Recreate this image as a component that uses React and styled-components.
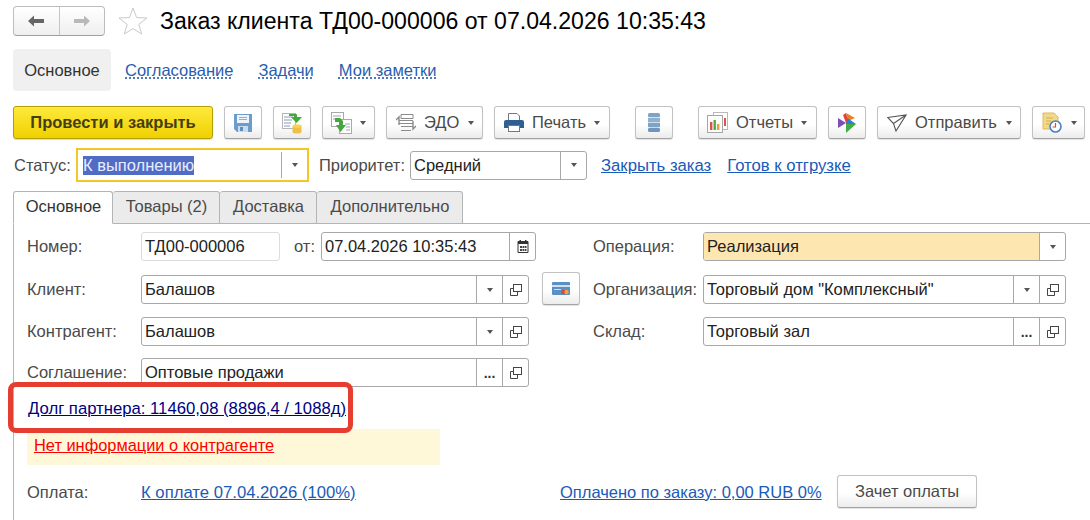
import React from "react";
import styled, { createGlobalStyle } from "styled-components";

const GlobalStyle = createGlobalStyle`
  html, body {
    margin: 0;
    padding: 0;
    background: #fff;
  }
  body {
    width: 1090px;
    height: 520px;
    overflow: hidden;
    font-family: "Liberation Sans", Arial, sans-serif;
    font-size: 16.5px;
    color: #333;
  }
`;

const Page = styled.div`
  position: relative;
  width: 1090px;
  height: 520px;
  padding-top: 6px;
  box-sizing: border-box;
  overflow: hidden;
`;

const Header = styled.div`
  display: flex;
  align-items: center;
  height: 30px;
  padding-left: 13px;
`;

const NavGroup = styled.div`
  display: flex;
  width: 92px;
  height: 30px;
  box-sizing: border-box;
  border: 1px solid #bdbdbd;
  border-bottom-color: #9f9f9f;
  border-radius: 4px;
  background: linear-gradient(#fff, #efefef);
`;

const NavButton = styled.div`
  flex: 1;
  display: flex;
  align-items: center;
  justify-content: center;
  & + & {
    border-left: 1px solid #c6c6c6;
  }
`;

const StarWrap = styled.div`
  display: flex;
  margin: 0 12px 0 13px;
`;

const Title = styled.div`
  font-size: 23.1px;
  color: #000;
  white-space: nowrap;
`;

const Sections = styled.div`
  display: flex;
  align-items: center;
  height: 42px;
  margin-top: 13px;
  padding-left: 13px;
`;

const SectionActive = styled.div`
  display: flex;
  align-items: center;
  justify-content: center;
  width: 98px;
  height: 42px;
  border-radius: 4px;
  background: #f0f0f0;
  color: #333;
`;

const SectionLink = styled.a`
  margin-left: ${(p) => p.$gap}px;
  color: #2a5db0;
  text-decoration: underline dotted #2a5db0;
  text-underline-offset: 2px;
`;

const Toolbar = styled.div`
  display: flex;
  height: 33px;
  margin-top: 15px;
  padding-left: 13px;
`;

const ToolButton = styled.div`
  display: flex;
  align-items: center;
  justify-content: ${(p) => (p.$pad ? "flex-start" : "center")};
  flex: none;
  width: ${(p) => p.$w}px;
  margin-left: ${(p) => p.$gap || 0}px;
  padding-left: ${(p) => p.$pad || 0}px;
  box-sizing: border-box;
  border: 1px solid #c2c2c2;
  border-bottom-color: #a3a3a3;
  border-radius: 3px;
  background: linear-gradient(#fff 55%, #ececec);
  box-shadow: 0 1px 1px rgba(0, 0, 0, 0.12);
  color: #4a4a4a;
  white-space: nowrap;
`;

const MainButton = styled.div`
  display: flex;
  align-items: center;
  justify-content: center;
  width: 200px;
  box-sizing: border-box;
  border: 1px solid #b59f00;
  border-radius: 3px;
  background: linear-gradient(#fdea3c, #f0d000);
  box-shadow: 0 1px 1px rgba(0, 0, 0, 0.15);
  color: #453e12;
  font-weight: bold;
  white-space: nowrap;
`;

const ToolLabel = styled.span`
  margin-left: ${(p) => p.$gap}px;
`;

const Caret = styled.i`
  display: block;
  flex: none;
  width: 0;
  height: 0;
  margin-left: ${(p) => p.$gap || 0}px;
  border-left: 3.5px solid transparent;
  border-right: 3.5px solid transparent;
  border-top: 4px solid #555;
`;

const StatusRow = styled.div`
  display: flex;
  align-items: center;
  height: 34px;
  margin-top: 9px;
  padding-left: 14px;
`;

const StatusLabel = styled.span`
  width: 62px;
  color: #4a4a4a;
`;

const StatusField = styled.div`
  display: flex;
  align-items: center;
  width: 233px;
  height: 34px;
  box-sizing: border-box;
  padding-left: 5px;
  border: 2px solid #f6c624;
`;

const StatusValue = styled.div`
  flex: 1;
  display: flex;
  align-items: center;
  height: 26px;
  border-right: 1px solid #a8a8a8;
`;

const Selected = styled.span`
  background: #506cc4;
  color: #e8ecff;
  line-height: 19px;
`;

const StatusArrow = styled.div`
  display: flex;
  align-items: center;
  justify-content: center;
  width: 25px;
`;

const PriorityLabel = styled.span`
  margin-left: 10px;
  width: 91px;
  color: #4a4a4a;
`;

const Field = styled.div`
  display: flex;
  flex: none;
  width: ${(p) => p.$w}px;
  height: 29px;
  box-sizing: border-box;
  border: 1px solid ${(p) => (p.$soft ? "#dcdcdc" : "#a8a8a8")};
  border-radius: 3px;
  background: #fff;
  overflow: hidden;
`;

const FieldText = styled.div`
  flex: 1;
  display: flex;
  align-items: center;
  padding-left: 3px;
  background: ${(p) => p.$bg || "transparent"};
  color: #222;
  white-space: nowrap;
`;

const FieldButton = styled.div`
  display: flex;
  flex: none;
  align-items: center;
  justify-content: center;
  width: 25px;
  border-left: 1px solid #a8a8a8;
  color: #333;
  font-size: 14px;
  font-weight: bold;
`;

const StatusLink = styled.a`
  margin-left: ${(p) => p.$gap}px;
  padding-top: 2px;
  color: #1a5ab8;
  font-size: 16.7px;
  text-decoration: underline;
`;

const Tabs = styled.div`
  position: relative;
  z-index: 1;
  display: flex;
  height: 33px;
  margin-top: 9px;
  margin-bottom: -1px;
  padding-left: 13px;
`;

const Tab = styled.div`
  display: flex;
  align-items: center;
  justify-content: center;
  width: ${(p) => p.$w}px;
  padding: 0 0 2px 1px;
  box-sizing: border-box;
  border: 1px solid #b4b4b4;
  border-left-width: ${(p) => (p.$first ? 1 : 0)}px;
  border-bottom-color: ${(p) => (p.$active ? "#fff" : "#b4b4b4")};
  border-radius: 3px 3px 0 0;
  background: ${(p) => (p.$active ? "#fff" : "#ebebeb")};
  color: ${(p) => (p.$active ? "#333" : "#4a4a4a")};
`;

const Panel = styled.div`
  margin-left: 13px;
  height: 300px;
  padding: 8px 0 0 13px;
  box-sizing: border-box;
  border-top: 1px solid #b4b4b4;
  border-left: 1px solid #b4b4b4;
`;

const FormGrid = styled.div`
  display: grid;
  grid-template-columns: 515px 38px 13px 473px;
  grid-template-rows: 43px 42px 41px 29px;
`;

const Row = styled.div`
  display: flex;
  align-items: flex-start;
  grid-column: ${(p) => p.$col};
`;

const Label = styled.div`
  flex: none;
  width: ${(p) => p.$w}px;
  height: 29px;
  line-height: 29px;
  color: #4a4a4a;
  white-space: nowrap;
`;

const OtLabel = styled.div`
  width: 41px;
  height: 29px;
  padding-right: 6px;
  box-sizing: border-box;
  line-height: 29px;
  text-align: right;
  color: #4a4a4a;
`;

const CardButton = styled(ToolButton)`
  grid-column: 2;
  height: 33px;
  margin-top: -3px;
  align-self: start;
`;

const DebtLine = styled.div`
  height: 42px;
  padding: 12px 0 0 1px;
  box-sizing: border-box;
  line-height: 19px;
`;

const DebtLink = styled.a`
  color: #00007f;
  font-size: 16.7px;
  text-decoration: underline;
`;

const Warning = styled.div`
  display: flex;
  align-items: center;
  width: 413px;
  height: 36px;
  padding: 0 0 3px 7px;
  box-sizing: border-box;
  background: #fff8d8;
`;

const WarningLink = styled.a`
  color: #f00;
  font-size: 16.4px;
  text-decoration: underline;
`;

const PayRow = styled.div`
  display: flex;
  align-items: center;
  height: 33px;
  margin-top: 10px;
`;

const PayLabel = styled(Label)`
  margin-top: 2px;
`;

const PayCell = styled.div`
  flex: none;
  width: ${(p) => p.$w}px;
  padding-top: 2px;
`;

const PayLink = styled.a`
  color: #1a5ab8;
  font-size: ${(p) => p.$size || 16.5}px;
  text-decoration: underline;
  white-space: nowrap;
`;

const OffsetButton = styled(ToolButton)`
  height: 33px;
`;

// the red frame someone drew over the screenshot
const Highlight = styled.div`
  position: absolute;
  left: 8px;
  top: 382px;
  width: 345px;
  height: 51px;
  box-sizing: border-box;
  border: 5px solid #e53d30;
  border-radius: 8px;
  pointer-events: none;
`;

const Arrow = ({ color, flip }) => (
  <svg width="18" height="14" viewBox="0 0 18 14" style={{ transform: flip ? "scaleX(-1)" : "none" }}>
    <path d="M1 7 L7 1.5 V5 H17 V9 H7 V12.5 Z" fill={color} />
  </svg>
);

const Star = () => (
  <svg width="30" height="28" viewBox="0 0 30 28">
    <path d="M15 1 L18.6 10.6 L29 11 L20.8 17.4 L23.7 27 L15 21.6 L6.3 27 L9.2 17.4 L1 11 L11.4 10.6 Z" fill="#fff" stroke="#c9c9c9" />
  </svg>
);

const SaveIcon = () => (
  <svg width="18" height="18" viewBox="0 0 18 18">
    <path d="M0 0 H18 V18 H3 L0 15 Z" fill="#6a9ccd" />
    <rect x="3" y="1" width="12" height="8" fill="#eef4fa" />
    <rect x="5" y="3" width="8" height="1" fill="#8eb2d4" />
    <rect x="5" y="5" width="8" height="1" fill="#8eb2d4" />
    <rect x="4" y="12" width="10" height="6" fill="#c9dbec" />
    <rect x="6" y="13" width="3" height="4" fill="#5b8dbf" />
  </svg>
);

const PostIcon = () => (
  <svg width="21" height="22" viewBox="0 0 21 22">
    <rect x="0.5" y="1.5" width="13" height="15" fill="#fff" stroke="#b5b5b5" />
    <path d="M2 5 H11 M2 8 H10 M2 11 H9 M2 14 H8" stroke="#8a9bb0" />
    <path d="M7 2 H14 Q15 2 15 3 V5 H20 L14.5 11 L9 5 H12 V4 H7 Z" fill="#45a83c" />
    <ellipse cx="15" cy="14" rx="4.5" ry="1.8" fill="#f6d25a" />
    <path d="M10.5 14 V20 C10.5 22 19.5 22 19.5 20 V14 C19.5 16 10.5 16 10.5 14 Z" fill="#eec043" />
  </svg>
);

const CopyGreenIcon = () => (
  <svg width="21" height="22" viewBox="0 0 21 22">
    <rect x="0.5" y="0.5" width="12" height="14" fill="#fff" stroke="#a9a9a9" />
    <path d="M2 4 H10 M2 7 H6" stroke="#9aa7b5" />
    <rect x="8.5" y="7.5" width="12" height="14" fill="#fff" stroke="#a9a9a9" />
    <path d="M14 12 H19 M15 15 H19 M15 18 H19" stroke="#9aa7b5" />
    <path d="M4 6 L9 6 L12 9 V13 H15 L9.5 20 L5 13 H8 V10 H4 Z" fill="#45a83c" />
  </svg>
);

const EdoIcon = () => (
  <svg width="20" height="20" viewBox="0 0 20 20" fill="none" stroke="#8b8b8b">
    <path d="M5 1.5 H17 V5.5 H5 Z M3 7.5 H17 M3 10.5 H17 M5 13.5 H17 M5 17.5 H15" />
    <path d="M0 7 L3 4 V12 M20 13 L17 16 V8" strokeWidth="1.4" />
  </svg>
);

const PrintIcon = () => (
  <svg width="20" height="19" viewBox="0 0 20 19">
    <path d="M5 0.5 H13 L15.5 3 V8 H4.5 V0.5 Z" fill="#fff" stroke="#777" />
    <path d="M2 7 H18 A2 2 0 0 1 20 9 V15 H16 V12 H4 V15 H0 V9 A2 2 0 0 1 2 7 Z" fill="#2f5f92" />
    <rect x="4.5" y="12.5" width="11" height="6" fill="#fff" stroke="#777" />
  </svg>
);

const StackIcon = () => (
  <svg width="12" height="19" viewBox="0 0 12 19">
    <rect x="0" y="0" width="12" height="4.3" rx="1.5" fill="#7ea3c6" />
    <rect x="0" y="4.9" width="12" height="4.3" fill="#8fb0cf" />
    <rect x="0" y="9.8" width="12" height="4.3" fill="#7ea3c6" />
    <rect x="0" y="14.7" width="12" height="4.3" rx="1.5" fill="#6e96bc" />
  </svg>
);

const ReportIcon = () => (
  <svg width="21" height="21" viewBox="0 0 21 21">
    <rect x="6.5" y="0.5" width="14" height="17" fill="#fff" stroke="#b9b9b9" />
    <rect x="0.5" y="3.5" width="15" height="17" fill="#fff" stroke="#a5a5a5" />
    <rect x="3" y="10" width="2.4" height="8" fill="#d9534a" />
    <rect x="6.5" y="8" width="2.4" height="10" fill="#55a84a" />
    <rect x="10" y="12" width="2.4" height="6" fill="#e0a530" />
    <rect x="17" y="6" width="2" height="8" fill="#d9534a" />
  </svg>
);

const PlayIcon = () => (
  <svg width="18" height="20" viewBox="0 0 18 20">
    <path d="M8 0 L17 5 L10 8 Z" fill="#f07d21" />
    <path d="M0 5 L8 10 L0 15 Z" fill="#7d4fb5" />
    <path d="M8 4 L18 11 L8 11 Z" fill="#2a7fd0" />
    <path d="M8 11 H18 L8 20 Z" fill="#3fae4a" />
    <path d="M5 2 L8 0 L10 8 L8 10 Z" fill="#e0433c" />
  </svg>
);

const SendIcon = () => (
  <svg width="20" height="18" viewBox="0 0 20 18" fill="none" stroke="#555" strokeWidth="1.1">
    <path d="M0.7 3.5 L19 1 L9 17 L6.5 9.5 Z M6.5 9.5 L19 1" />
  </svg>
);

const ScheduleIcon = () => (
  <svg width="20" height="21" viewBox="0 0 20 21">
    <path d="M1 1 H12 L16 5 V17 H1 Z" fill="#f2d98a" stroke="#d8b95c" />
    <path d="M4 6 H11 M4 9 H9 M4 12 H7" stroke="#d1ae4a" />
    <circle cx="13.5" cy="14.5" r="5.5" fill="#fff" stroke="#4a83c4" strokeWidth="1.6" />
    <path d="M13.5 11 V15 H10.5" stroke="#d9483c" strokeWidth="1.2" fill="none" />
  </svg>
);

const CalendarIcon = () => (
  <svg width="12" height="13" viewBox="0 0 12 13">
    <path d="M1 1.5 H11 V12.5 H1 Z" fill="#fff" stroke="#333" />
    <rect x="1" y="1" width="10" height="3" fill="#333" />
    <rect x="2.5" y="0" width="1.5" height="2" fill="#333" />
    <rect x="8" y="0" width="1.5" height="2" fill="#333" />
    <path d="M3 6 H5 V8 H3 Z M5.5 6 H7 V8 H5.5 Z M7.5 6 H9.5 V8 H7.5 Z M3 9 H5 V11 H3 Z M5.5 9 H7 V11 H5.5 Z M7.5 9 H9.5 V11 H7.5 Z" fill="#444" />
  </svg>
);

const OpenIcon = () => (
  <svg width="12" height="12" viewBox="0 0 12 12" fill="none" stroke="#444">
    <rect x="3.5" y="0.5" width="8" height="7" />
    <path d="M3 4.5 H0.5 V11.5 H7.5 V8" />
  </svg>
);

const CardIcon = () => (
  <svg width="18" height="13" viewBox="0 0 18 13">
    <rect x="0" y="0" width="18" height="13" rx="1" fill="#5b90c6" />
    <rect x="0" y="3" width="18" height="2" fill="#cfe0f0" />
    <rect x="2" y="7" width="7" height="1" fill="#cfe0f0" />
    <circle cx="11.5" cy="10" r="2.2" fill="#e0443a" />
    <circle cx="14.5" cy="10" r="2.2" fill="#f2a531" />
  </svg>
);

const App = () => {
  return (
    <Page>
      <GlobalStyle />
      <Header>
        <NavGroup>
          <NavButton><Arrow color="#666" /></NavButton>
          <NavButton><Arrow color="#b9b9b9" flip /></NavButton>
        </NavGroup>
        <StarWrap><Star /></StarWrap>
        <Title>Заказ клиента ТД00-000006 от 07.04.2026 10:35:43</Title>
      </Header>

      <Sections>
        <SectionActive>Основное</SectionActive>
        <SectionLink $gap={14}>Согласование</SectionLink>
        <SectionLink $gap={25}>Задачи</SectionLink>
        <SectionLink $gap={25}>Мои заметки</SectionLink>
      </Sections>

      <Toolbar>
        <MainButton>Провести и закрыть</MainButton>
        <ToolButton $w={38} $gap={11}><SaveIcon /></ToolButton>
        <ToolButton $w={38} $gap={11}><PostIcon /></ToolButton>
        <ToolButton $w={53} $gap={11} $pad={8}><CopyGreenIcon /><Caret $gap={8} /></ToolButton>
        <ToolButton $w={97} $gap={11} $pad={9}>
          <EdoIcon /><ToolLabel $gap={8}>ЭДО</ToolLabel><Caret $gap={9} />
        </ToolButton>
        <ToolButton $w={116} $gap={11} $pad={9}>
          <PrintIcon /><ToolLabel $gap={8}>Печать</ToolLabel><Caret $gap={8} />
        </ToolButton>
        <ToolButton $w={38} $gap={25}><StackIcon /></ToolButton>
        <ToolButton $w={119} $gap={25} $pad={8}>
          <ReportIcon /><ToolLabel $gap={8}>Отчеты</ToolLabel><Caret $gap={8} />
        </ToolButton>
        <ToolButton $w={38} $gap={11}><PlayIcon /></ToolButton>
        <ToolButton $w={144} $gap={11} $pad={9}>
          <SendIcon /><ToolLabel $gap={8}>Отправить</ToolLabel><Caret $gap={9} />
        </ToolButton>
        <ToolButton $w={53} $gap={11} $pad={9}><ScheduleIcon /><Caret $gap={9} /></ToolButton>
      </Toolbar>

      <StatusRow>
        <StatusLabel>Статус:</StatusLabel>
        <StatusField>
          <StatusValue><Selected>К выполнению</Selected></StatusValue>
          <StatusArrow><Caret /></StatusArrow>
        </StatusField>
        <PriorityLabel>Приоритет:</PriorityLabel>
        <Field $w={177}>
          <FieldText>Средний</FieldText>
          <FieldButton><Caret /></FieldButton>
        </Field>
        <StatusLink $gap={14}>Закрыть заказ</StatusLink>
        <StatusLink $gap={16}>Готов к отгрузке</StatusLink>
      </StatusRow>

      <Tabs>
        <Tab $w={100} $first $active>Основное</Tab>
        <Tab $w={107}>Товары (2)</Tab>
        <Tab $w={97}>Доставка</Tab>
        <Tab $w={146}>Дополнительно</Tab>
      </Tabs>

      <Panel>
        <FormGrid>
          <Row $col={1}>
            <Label $w={114}>Номер:</Label>
            <Field $w={139} $soft><FieldText>ТД00-000006</FieldText></Field>
            <OtLabel>от:</OtLabel>
            <Field $w={215}>
              <FieldText>07.04.2026 10:35:43</FieldText>
              <FieldButton><CalendarIcon /></FieldButton>
            </Field>
          </Row>
          <Row $col={4}>
            <Label $w={110}>Операция:</Label>
            <Field $w={363}>
              <FieldText $bg="#fee6b0">Реализация</FieldText>
              <FieldButton><Caret /></FieldButton>
            </Field>
          </Row>

          <Row $col={1}>
            <Label $w={114}>Клиент:</Label>
            <Field $w={388}>
              <FieldText>Балашов</FieldText>
              <FieldButton><Caret /></FieldButton>
              <FieldButton><OpenIcon /></FieldButton>
            </Field>
          </Row>
          <CardButton $w={38}><CardIcon /></CardButton>
          <Row $col={4}>
            <Label $w={110}>Организация:</Label>
            <Field $w={363}>
              <FieldText>Торговый дом "Комплексный"</FieldText>
              <FieldButton><Caret /></FieldButton>
              <FieldButton><OpenIcon /></FieldButton>
            </Field>
          </Row>

          <Row $col={1}>
            <Label $w={114}>Контрагент:</Label>
            <Field $w={388}>
              <FieldText>Балашов</FieldText>
              <FieldButton><Caret /></FieldButton>
              <FieldButton><OpenIcon /></FieldButton>
            </Field>
          </Row>
          <Row $col={4}>
            <Label $w={110}>Склад:</Label>
            <Field $w={363}>
              <FieldText>Торговый зал</FieldText>
              <FieldButton>...</FieldButton>
              <FieldButton><OpenIcon /></FieldButton>
            </Field>
          </Row>

          <Row $col={1}>
            <Label $w={114}>Соглашение:</Label>
            <Field $w={388}>
              <FieldText>Оптовые продажи</FieldText>
              <FieldButton>...</FieldButton>
              <FieldButton><OpenIcon /></FieldButton>
            </Field>
          </Row>
        </FormGrid>

        <DebtLine>
          <DebtLink>Долг партнера: 11460,08 (8896,4 / 1088д)</DebtLink>
        </DebtLine>

        <Warning>
          <WarningLink>Нет информации о контрагенте</WarningLink>
        </Warning>

        <PayRow>
          <PayLabel $w={114}>Оплата:</PayLabel>
          <PayCell $w={419}><PayLink $size={16.7}>К оплате 07.04.2026 (100%)</PayLink></PayCell>
          <PayCell $w={277}><PayLink>Оплачено по заказу: 0,00 RUB 0%</PayLink></PayCell>
          <OffsetButton $w={140}>Зачет оплаты</OffsetButton>
        </PayRow>
      </Panel>

      <Highlight />
    </Page>
  );
};

export default App;
